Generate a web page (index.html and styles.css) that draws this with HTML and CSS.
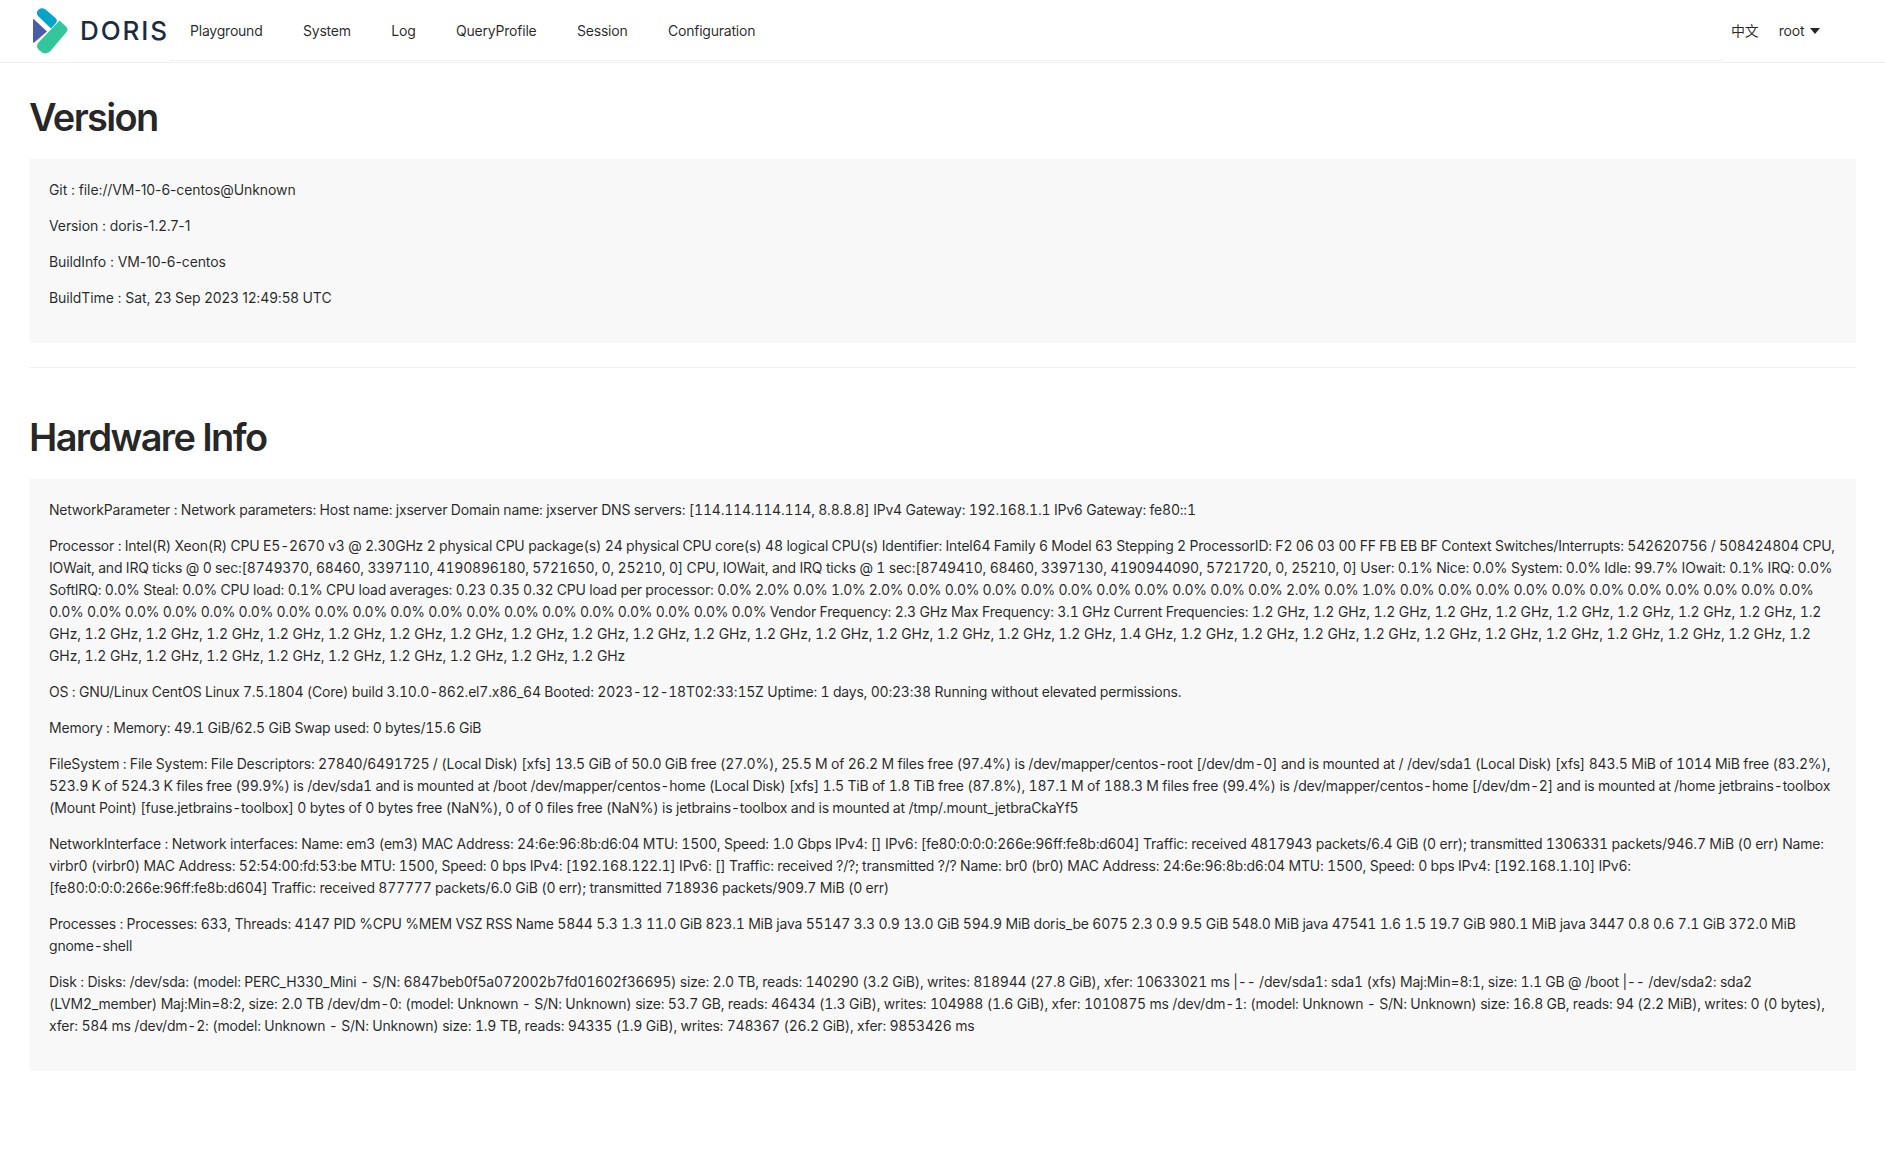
FILE: index.html
```html
<!DOCTYPE html>
<html lang="en">
<head>
<meta charset="utf-8">
<title>Doris</title>
<link rel="stylesheet" href="styles.css">
</head>
<body>
<header class="header">
  <div class="logo">
    <svg class="logo-mark" viewBox="0 0 35 46" width="35" height="46" aria-hidden="true">
      <path d="M0 12 Q0 10.5 1.2 11.5 L14 23.5 L1.2 34.5 Q0 35.5 0 34 Z" fill="#4a5ea8"/>
      <path d="M5.5 1.7 Q9 -1 12.5 1.5 L22.5 10 Q25 12.5 23 15 L18 20.5 L5 8 Q2.5 4.5 5.5 1.7 Z" fill="#05a5c9"/>
      <path d="M26.5 12.5 L33.5 19 Q35.5 21.5 33.5 24 L17.5 43 Q13.5 47 9 44.5 L5.5 41.5 Q2.5 38 5.5 34.5 Z" fill="#33c69c"/>
    </svg>
    <span class="logo-text">DORIS</span>
  </div>
  <nav class="nav">
    <a class="nav-item">Playground</a>
    <a class="nav-item">System</a>
    <a class="nav-item">Log</a>
    <a class="nav-item">QueryProfile</a>
    <a class="nav-item">Session</a>
    <a class="nav-item">Configuration</a>
  </nav>
  <div class="tools">
    <span class="lang">中文</span>
    <span class="user">root<i class="caret"></i></span>
  </div>
</header>
<main class="main">
  <h1 class="title">Version</h1>
  <section class="box box-version">
    <p>Git : file://VM-10-6-centos@Unknown</p>
    <p>Version : doris-1.2.7-1</p>
    <p>BuildInfo : VM-10-6-centos</p>
    <p>BuildTime : Sat, 23 Sep 2023 12:49:58 UTC</p>
  </section>
  <hr class="rule">
  <h1 class="title">Hardware Info</h1>
  <section class="box box-hardware">
    <p>NetworkParameter : Network parameters: Host name: jxserver Domain name: jxserver DNS servers: [114.114.114.114, 8.8.8.8] IPv4 Gateway: 192.168.1.1 IPv6 Gateway: fe80::1</p>
    <p>Processor : Intel(R) Xeon(R) CPU E5-2670 v3 @ 2.30GHz 2 physical CPU package(s) 24 physical CPU core(s) 48 logical CPU(s) Identifier: Intel64 Family 6 Model 63 Stepping 2 ProcessorID: F2 06 03 00 FF FB EB BF Context Switches/Interrupts: 542620756 / 508424804 CPU, IOWait, and IRQ ticks @ 0 sec:[8749370, 68460, 3397110, 4190896180, 5721650, 0, 25210, 0] CPU, IOWait, and IRQ ticks @ 1 sec:[8749410, 68460, 3397130, 4190944090, 5721720, 0, 25210, 0] User: 0.1% Nice: 0.0% System: 0.0% Idle: 99.7% IOwait: 0.1% IRQ: 0.0% SoftIRQ: 0.0% Steal: 0.0% CPU load: 0.1% CPU load averages: 0.23 0.35 0.32 CPU load per processor: <span class="cpu-load">0.0% 2.0% 0.0% 1.0% 2.0% 0.0% 0.0% 0.0% 0.0% 0.0% 0.0% 0.0% 0.0% 0.0% 0.0% 2.0% 0.0% 1.0% 0.0% 0.0% 0.0% 0.0% 0.0% 0.0% 0.0% 0.0% 0.0% 0.0% 0.0% 0.0% 0.0% 0.0% 0.0% 0.0% 0.0% 0.0% 0.0% 0.0% 0.0% 0.0% 0.0% 0.0% 0.0% 0.0% 0.0% 0.0% 0.0% 0.0%</span> Vendor Frequency: 2.3 GHz Max Frequency: 3.1 GHz Current Frequencies: <span class="freqs">1.2 GHz, 1.2 GHz, 1.2 GHz, 1.2 GHz, 1.2 GHz, 1.2 GHz, 1.2 GHz, 1.2 GHz, 1.2 GHz, 1.2 GHz, 1.2 GHz, 1.2 GHz, 1.2 GHz, 1.2 GHz, 1.2 GHz, 1.2 GHz, 1.2 GHz, 1.2 GHz, 1.2 GHz, 1.2 GHz, 1.2 GHz, 1.2 GHz, 1.2 GHz, 1.2 GHz, 1.2 GHz, 1.2 GHz, 1.2 GHz, 1.4 GHz, 1.2 GHz, 1.2 GHz, 1.2 GHz, 1.2 GHz, 1.2 GHz, 1.2 GHz, 1.2 GHz, 1.2 GHz, 1.2 GHz, 1.2 GHz, 1.2 GHz, 1.2 GHz, 1.2 GHz, 1.2 GHz, 1.2 GHz, 1.2 GHz, 1.2 GHz, 1.2 GHz, 1.2 GHz, 1.2 GHz</span></p>
    <p>OS : GNU/Linux CentOS Linux 7.5.1804 (Core) build 3.10.0-862.el7.x86_64 Booted: 2023-12-18T02:33:15Z Uptime: 1 days, 00:23:38 Running without elevated permissions.</p>
    <p>Memory : Memory: 49.1 GiB/62.5 GiB Swap used: 0 bytes/15.6 GiB</p>
    <p>FileSystem : File System: File Descriptors: 27840/6491725 / (Local Disk) [xfs] 13.5 GiB of 50.0 GiB free (27.0%), 25.5 M of 26.2 M files free (97.4%) is /dev/mapper/centos-root [/dev/dm-0] and is mounted at / /dev/sda1 (Local Disk) [xfs] 843.5 MiB of 1014 MiB free (83.2%), 523.9 K of 524.3 K files free (99.9%) is /dev/sda1 and is mounted at /boot /dev/mapper/centos-home (Local Disk) [xfs] 1.5 TiB of 1.8 TiB free (87.8%), 187.1 M of 188.3 M files free (99.4%) is /dev/mapper/centos-home [/dev/dm-2] and is mounted at /home jetbrains-toolbox (Mount Point) [fuse.jetbrains-toolbox] 0 bytes of 0 bytes free (NaN%), 0 of 0 files free (NaN%) is jetbrains-toolbox and is mounted at /tmp/.mount_jetbraCkaYf5</p>
    <p>NetworkInterface : Network interfaces: Name: em3 (em3) MAC Address: 24:6e:96:8b:d6:04 MTU: 1500, Speed: 1.0 Gbps IPv4: [] IPv6: [fe80:0:0:0:266e:96ff:fe8b:d604] Traffic: received 4817943 packets/6.4 GiB (0 err); transmitted 1306331 packets/946.7 MiB (0 err) Name: virbr0 (virbr0) MAC Address: 52:54:00:fd:53:be MTU: 1500, Speed: 0 bps IPv4: [192.168.122.1] IPv6: [] Traffic: received ?/?; transmitted ?/? Name: br0 (br0) MAC Address: 24:6e:96:8b:d6:04 MTU: 1500, Speed: 0 bps IPv4: [192.168.1.10] IPv6: [fe80:0:0:0:266e:96ff:fe8b:d604] Traffic: received 877777 packets/6.0 GiB (0 err); transmitted 718936 packets/909.7 MiB (0 err)</p>
    <p>Processes : Processes: 633, Threads: 4147 PID %CPU %MEM VSZ RSS Name 5844 5.3 1.3 11.0 GiB 823.1 MiB java 55147 3.3 0.9 13.0 GiB 594.9 MiB doris_be 6075 2.3 0.9 9.5 GiB 548.0 MiB java 47541 1.6 1.5 19.7 GiB 980.1 MiB java 3447 0.8 0.6 7.1 GiB 372.0 MiB gnome-shell</p>
    <p>Disk : Disks: /dev/sda: (model: PERC_H330_Mini - S/N: 6847beb0f5a072002b7fd01602f36695) size: 2.0 TB, reads: 140290 (3.2 GiB), writes: 818944 (27.8 GiB), xfer: 10633021 ms |-- /dev/sda1: sda1 (xfs) Maj:Min=8:1, size: 1.1 GB @ /boot |-- /dev/sda2: sda2 (LVM2_member) Maj:Min=8:2, size: 2.0 TB /dev/dm-0: (model: Unknown - S/N: Unknown) size: 53.7 GB, reads: 46434 (1.3 GiB), writes: 104988 (1.6 GiB), xfer: 1010875 ms /dev/dm-1: (model: Unknown - S/N: Unknown) size: 16.8 GB, reads: 94 (2.2 MiB), writes: 0 (0 bytes), xfer: 584 ms /dev/dm-2: (model: Unknown - S/N: Unknown) size: 1.9 TB, reads: 94335 (1.9 GiB), writes: 748367 (26.2 GiB), xfer: 9853426 ms</p>
  </section>
</main>
</body>
</html>
```
FILE: styles.css
```css
* { box-sizing: border-box; }
html, body { margin: 0; background: #fff; }
body {
  font-family: Inter, "Noto Sans CJK SC", sans-serif;
  font-size: 14px;
  line-height: 22px;
  color: rgba(0,0,0,.85);
  min-height: 1154px;
}
.header {
  display: flex;
  align-items: stretch;
  height: 63px;
  border-bottom: 1px solid #f0f0f0;
}
.logo { display: flex; align-items: center; width: 170px; padding-left: 33px; flex: none; }
.logo-mark { flex: none; }
.logo-text { margin-left: 12px; font-size: 26px; letter-spacing: 1.9px; color: #1d2b3f; font-weight: 500; line-height: 30px; }
.nav { display: flex; align-items: center; flex: 1; gap: 40.5px; padding: 1px 20px 0; height: 61px; border-bottom: 1px solid #f0f0f0; letter-spacing: -0.22px; }
.nav-item { white-space: nowrap; }
.tools { display: flex; align-items: center; gap: 20px; width: 162px; padding-left: 8px; height: 62px; flex: none; letter-spacing: -0.17px; }
.user { display: flex; align-items: center; gap: 6px; }
.caret { width: 0; height: 0; border-left: 5px solid transparent; border-right: 5px solid transparent; border-top: 6px solid #262626; }
.main { padding: 0 29px; }
.title { font-size: 38px; font-weight: 600; line-height: 46px; letter-spacing: -1.65px; margin: 31px 0 19px; color: rgba(0,0,0,.85); }
.box { background: #f8f8f8; padding: 20px; }
.box p { margin: 0 0 14px; }
.box-version { letter-spacing: -0.1px; }
.box-hardware { letter-spacing: -0.21px; font-variant-numeric: tabular-nums; }
.cpu-load { letter-spacing: -0.3px; }
.freqs { letter-spacing: -0.1px; }
.rule { border: 0; border-top: 1px solid #f0f0f0; margin: 24px 0 46px; }
.rule + .title { margin-top: 0; margin-bottom: 19px; }
```
